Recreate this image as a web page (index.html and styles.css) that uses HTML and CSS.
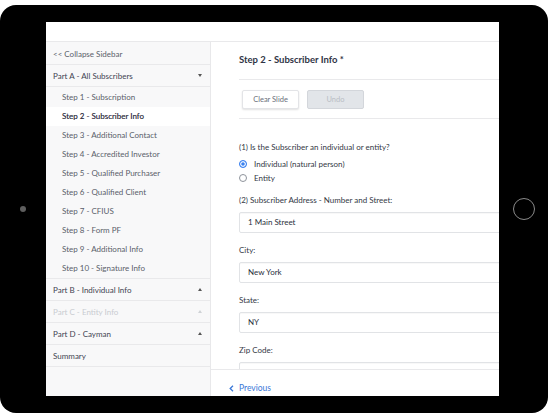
FILE: index.html
```html
<!DOCTYPE html>
<html>
<head>
<meta charset="utf-8">
<link rel="stylesheet" href="styles.css">
</head>
<body>
<div class="tablet">
  <div class="bezel-left"><span class="camera"></span></div>
  <div class="screen">
    <div class="topbar"></div>
    <div class="app">
      <nav class="sidebar">
        <div class="row collapse">&lt;&lt; Collapse Sidebar</div>
        <div class="row part">Part A - All Subscribers<span class="caret down"></span></div>
        <div class="steps">
          <div class="step">Step 1 - Subscription</div>
          <div class="step active">Step 2 - Subscriber Info</div>
          <div class="step">Step 3 - Additional Contact</div>
          <div class="step">Step 4 - Accredited Investor</div>
          <div class="step">Step 5 - Qualified Purchaser</div>
          <div class="step">Step 6 - Qualified Client</div>
          <div class="step">Step 7 - CFIUS</div>
          <div class="step">Step 8 - Form PF</div>
          <div class="step">Step 9 - Additional Info</div>
          <div class="step">Step 10 - Signature Info</div>
        </div>
        <div class="row part">Part B - Individual Info<span class="caret up"></span></div>
        <div class="row part disabled">Part C - Entity Info<span class="caret up"></span></div>
        <div class="row part">Part D - Cayman<span class="caret up"></span></div>
        <div class="row part">Summary</div>
      </nav>
      <main class="main">
        <div class="content">
          <h1 class="title">Step 2 - Subscriber Info *</h1>
          <div class="toolbar">
            <button class="btn">Clear Slide</button>
            <button class="btn btn-disabled">Undo</button>
          </div>
          <div class="form">
            <div class="label">(1) Is the Subscriber an individual or entity?</div>
            <div class="radios">
              <div class="radio-row"><span class="radio checked"></span>Individual (natural person)</div>
              <div class="radio-row"><span class="radio"></span>Entity</div>
            </div>
            <div class="field">
              <div class="label">(2) Subscriber Address - Number and Street:</div>
              <div class="input">1 Main Street</div>
            </div>
            <div class="field">
              <div class="label">City:</div>
              <div class="input">New York</div>
            </div>
            <div class="field">
              <div class="label">State:</div>
              <div class="input">NY</div>
            </div>
            <div class="field">
              <div class="label">Zip Code:</div>
              <div class="input">10017</div>
            </div>
          </div>
        </div>
        <div class="footer">
          <span class="prev"><svg width="5" height="7" viewBox="0 0 5 7"><path d="M4 0.8 L1.2 3.5 L4 6.2" fill="none" stroke="#3a78d8" stroke-width="1.3"/></svg>Previous</span>
        </div>
      </main>
    </div>
  </div>
  <div class="bezel-right"><span class="home"></span></div>
</div>
</body>
</html>
```

FILE: styles.css
```css
html, body {
  margin: 0;
  padding: 0;
  background: #fff;
}
body {
  width: 548px;
  height: 419px;
  overflow: hidden;
  font-family: Lato, "Open Sans", sans-serif;
}
.tablet {
  margin-top: 5px;
  height: 408px;
  background: #000;
  border-radius: 16px;
  display: flex;
  align-items: center;
}
.bezel-left {
  width: 46px;
  display: flex;
  justify-content: center;
}
.camera {
  width: 6px;
  height: 6px;
  border-radius: 50%;
  background: #5e5e5e;
}
.bezel-right {
  flex: 1;
  display: flex;
  justify-content: center;
}
.home {
  width: 20px;
  height: 20px;
  border-radius: 50%;
  border: 1px solid #8a8a8a;
}
.screen {
  width: 453px;
  height: 374px;
  background: #fff;
  overflow: hidden;
  display: flex;
  flex-direction: column;
}
.topbar {
  height: 19px;
  flex: none;
  border-bottom: 1px solid #e9e9eb;
}
.app {
  flex: 1;
  display: flex;
  min-height: 0;
}
.sidebar {
  width: 164px;
  flex: none;
  background: #f8f8f9;
  border-right: 1px solid #e8e8ea;
  font-size: 8px;
  color: #4b505c;
}
.row {
  box-sizing: border-box;
  height: 22px;
  padding-left: 7px;
  padding-right: 8px;
  border-bottom: 1px solid #e9e9eb;
  display: flex;
  justify-content: space-between;
  align-items: center;
}
.collapse {
  height: 23px;
  padding-top: 1px;
  color: #5a5f6a;
}
.part {
  color: #3f4452;
}
.part.disabled {
  color: #c9ccd1;
}
.caret {
  width: 0;
  height: 0;
  border-left: 2.5px solid transparent;
  border-right: 2.5px solid transparent;
}
.caret.down {
  border-top: 3px solid #555;
}
.caret.up {
  border-bottom: 3px solid #555;
}
.part.disabled .caret.up {
  border-bottom-color: #cfd2d6;
}
.steps {
  border-bottom: 1px solid #e9e9eb;
  padding-top: 1px;
}
.step {
  height: 19px;
  line-height: 19px;
  padding-left: 16px;
  color: #5a5f6a;
}
.step.active {
  background: #fff;
  color: #1f2435;
  -webkit-text-stroke: 0.15px #1f2435;
}
.main {
  flex: 1;
  display: flex;
  flex-direction: column;
  min-width: 0;
}
.content {
  flex: 1;
  overflow: hidden;
  padding-left: 28px;
  min-height: 0;
}
.title {
  margin: 0;
  padding-top: 11px;
  padding-bottom: 12px;
  line-height: 14px;
  font-size: 9.5px;
  font-weight: 700;
  color: #2f3445;
  border-bottom: 1px solid #e9e9eb;
  width: 320px;
}
.toolbar {
  width: 320px;
  padding: 10px 0 9px 3px;
  display: flex;
  gap: 8px;
  border-bottom: 1px solid #e9e9eb;
}
.btn {
  width: 57px;
  height: 19px;
  font-family: Lato, sans-serif;
  font-size: 7.5px;
  color: #6a6f7a;
  background: #fff;
  border: 1px solid #e3e4e7;
  border-radius: 2px;
  box-shadow: 0 1px 2px rgba(0,0,0,0.12);
  padding: 0;
}
.btn-disabled {
  background: #e2e5e9;
  color: #b9bdc4;
  border-color: #d3d6db;
  box-shadow: none;
}
.form {
  padding-top: 22px;
  font-size: 8px;
  color: #333845;
}
.label {
  line-height: 12px;
}
.radios {
  margin-top: 4px;
  margin-bottom: 9px;
}
.radio-row {
  height: 14px;
  display: flex;
  align-items: center;
}
.radio {
  width: 6px;
  height: 6px;
  border-radius: 50%;
  border: 1px solid #8e939b;
  margin-right: 7px;
  background: #fff;
}
.radio.checked {
  border-color: #3b82f0;
  background: #3b82f0;
  box-shadow: inset 0 0 0 1.2px #fff;
}
.field {
  margin-bottom: 11px;
}
.field .label {
  margin-bottom: 6px;
}
.input {
  width: 310px;
  height: 19px;
  line-height: 19px;
  border: 1px solid #e1e3e6;
  border-radius: 2px;
  padding-left: 8px;
  color: #2a2f3c;
  box-shadow: inset 0 1px 1px rgba(0,0,0,0.03);
}
.footer {
  height: 27px;
  flex: none;
  border-top: 1px solid #e9e9eb;
  background: #fff;
  padding-left: 18px;
  box-sizing: border-box;
  display: flex;
  align-items: flex-end;
  padding-bottom: 2px;
}
.prev {
  font-size: 8.5px;
  color: #3a78d8;
  display: flex;
  align-items: center;
  gap: 5px;
  line-height: 12px;
}
```
